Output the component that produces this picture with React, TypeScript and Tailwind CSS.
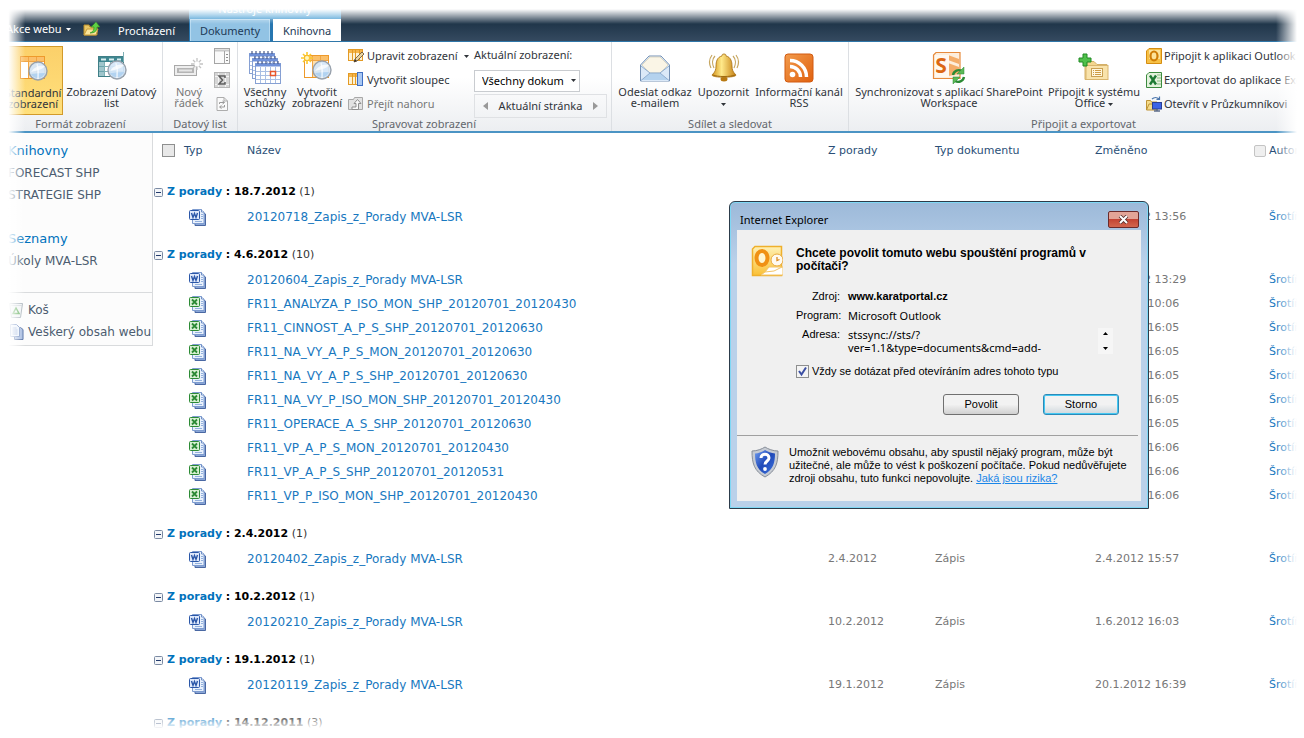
import { ReactNode, useState } from "react";

interface Item {
  kind: "word" | "excel";
  name: string;
  meeting?: string;
  docType?: string;
  modified: string;
}

interface Group {
  date: string;
  count: number;
  items: Item[];
}

const GROUPS: Group[] = [
  {
    date: "18.7.2012",
    count: 1,
    items: [{ kind: "word", name: "20120718_Zapis_z_Porady MVA-LSR", modified: "18.7.2012 13:56" }],
  },
  {
    date: "4.6.2012",
    count: 10,
    items: [
      { kind: "word", name: "20120604_Zapis_z_Porady MVA-LSR", modified: "18.7.2012 13:29" },
      { kind: "excel", name: "FR11_ANALYZA_P_ISO_MON_SHP_20120701_20120430", modified: "4.6.2012 10:06" },
      { kind: "excel", name: "FR11_CINNOST_A_P_S_SHP_20120701_20120630", modified: "1.6.2012 16:05" },
      { kind: "excel", name: "FR11_NA_VY_A_P_S_MON_20120701_20120630", modified: "1.6.2012 16:05" },
      { kind: "excel", name: "FR11_NA_VY_A_P_S_SHP_20120701_20120630", modified: "1.6.2012 16:05" },
      { kind: "excel", name: "FR11_NA_VY_P_ISO_MON_SHP_20120701_20120430", modified: "1.6.2012 16:05" },
      { kind: "excel", name: "FR11_OPERACE_A_S_SHP_20120701_20120630", modified: "1.6.2012 16:05" },
      { kind: "excel", name: "FR11_VP_A_P_S_MON_20120701_20120430", modified: "1.6.2012 16:06" },
      { kind: "excel", name: "FR11_VP_A_P_S_SHP_20120701_20120531", modified: "1.6.2012 16:06" },
      { kind: "excel", name: "FR11_VP_P_ISO_MON_SHP_20120701_20120430", modified: "1.6.2012 16:06" },
    ],
  },
  {
    date: "2.4.2012",
    count: 1,
    items: [
      { kind: "word", name: "20120402_Zapis_z_Porady MVA-LSR", meeting: "2.4.2012", docType: "Zápis", modified: "2.4.2012 15:57" },
    ],
  },
  {
    date: "10.2.2012",
    count: 1,
    items: [
      { kind: "word", name: "20120210_Zapis_z_Porady MVA-LSR", meeting: "10.2.2012", docType: "Zápis", modified: "1.6.2012 16:03" },
    ],
  },
  {
    date: "19.1.2012",
    count: 1,
    items: [
      { kind: "word", name: "20120119_Zapis_z_Porady MVA-LSR", meeting: "19.1.2012", docType: "Zápis", modified: "20.1.2012 16:39" },
    ],
  },
  { date: "14.12.2011", count: 3, items: [] },
];

/* ---------- icons ---------- */

function FolderUpIcon() {
  return (
    <svg width="17" height="16" viewBox="0 0 17 16">
      <path d="M1 4h5l1 2h7v8H1z" fill="#e9c765" stroke="#b98e2c" />
      <path d="M1 14l3-6h11l-2 6z" fill="#fbe59b" stroke="#c89c38" />
      <path d="M7 12c3-1 4-3 4-6H8l5-5 4 5h-3c0 4-2 6-7 6z" fill="#5fd043" stroke="#2a8a1d" strokeWidth=".6" />
    </svg>
  );
}

function Lens() {
  return (
    <g>
      <circle cx="21" cy="18" r="9" fill="#d5e6f7" fillOpacity=".93" stroke="#98a1ac" strokeWidth="1.400" />
      <path d="M14 19c4-6 9-7 14-6-2 3-6 4-14 6z" fill="#fff" fillOpacity=".75" />
      <path d="M14 21q8-1 14-1-2 5-7 5t-7-4z" fill="#a9cdef" fillOpacity=".8" />
      <path d="M20 11q2 7 1 15" fill="none" stroke="#fff" strokeWidth="1.500" strokeOpacity=".7" />
    </g>
  );
}

function GridViewIcon({ sparkle }: { sparkle?: boolean }) {
  return (
    <svg width="32" height="32" viewBox="0 0 32 32">
      <rect x="3.500" y="3.500" width="24" height="22" fill="#fff" stroke="#ee9a2b" />
      <rect x="4" y="4" width="23" height="4" fill="#fbc06a" />
      <path d="M11.500 4v21M19.500 4v21M4 8.500h23" stroke="#f0a545" />
      <rect x="12" y="9" width="7" height="16" fill="#fde0b0" />
      <Lens />
      {sparkle && (
        <g stroke="#fbc92d" strokeWidth="1.600">
          <path d="M6 0v12M0 6h12M2 2l8 8M10 2l-8 8" />
          <circle cx="6" cy="6" r="2" fill="#fff6c0" stroke="none" />
        </g>
      )}
    </svg>
  );
}

function DatasheetIcon() {
  return (
    <svg width="32" height="32" viewBox="0 0 32 32">
      <rect x="2.500" y="4.500" width="25" height="20" fill="#fff" stroke="#3f7f87" />
      <rect x="3" y="5" width="24" height="5" fill="#3f8791" />
      <path d="M5 7.500h5M13 7.500h5M21 7.500h4" stroke="#d9eef0" strokeWidth="2" />
      <path d="M3 14.500h24M3 19.500h24M8.500 10v14M14.500 10v14M20.500 10v14M27.500 0v10" stroke="#7fb0b5" />
      <rect x="3" y="10" width="5" height="14" fill="#5f9fa8" fillOpacity=".6" />
      <Lens />
    </svg>
  );
}

function NewRowIcon() {
  return (
    <svg width="32" height="32" viewBox="0 0 32 32">
      <rect x="1.500" y="13.500" width="22" height="10" fill="#eee" stroke="#a9a9a9" />
      <rect x="4" y="16" width="17" height="5" fill="#b5b5b5" />
      <rect x="6" y="17.500" width="13" height="2" fill="#e6e6e6" />
      <g stroke="#c3c3c3" strokeWidth="1.300">
        <path d="M24 6v12M18 12h12M20 8l8 8M28 8l-8 8" />
      </g>
      <circle cx="24" cy="12" r="2.500" fill="#fff" />
    </svg>
  );
}

function PaneIcon() {
  return (
    <svg width="16" height="16" viewBox="0 0 16 16">
      <rect x=".5" y=".5" width="15" height="15" fill="#fafafa" stroke="#a5a5a5" />
      <path d="M1 2.500h14" stroke="#c9c9c9" strokeWidth="2" />
      <path d="M10.500 3v12" stroke="#a5a5a5" />
      <path d="M12 6.500h2M12 9.500h2M12 12.500h2" stroke="#8d8d8d" />
    </svg>
  );
}

function SumIcon() {
  return (
    <svg width="16" height="16" viewBox="0 0 16 16">
      <rect x=".5" y=".5" width="15" height="15" fill="#d6d6d6" stroke="#b5b5b5" />
      <path d="M1 4.500h14M1 12.500h14M4.500 1v14M11.500 1v14" stroke="#f4f4f4" />
      <path d="M11 6V4H5l3.500 4L5 12h6v-2" fill="none" stroke="#5c5c5c" strokeWidth="1.500" />
    </svg>
  );
}

function RefreshPageIcon() {
  return (
    <svg width="16" height="16" viewBox="0 0 16 16">
      <path d="M3 1.500h7l3.500 3.500v9.500H3z" fill="#fafafa" stroke="#adadad" />
      <path d="M10 1.500V5h3.500" fill="none" stroke="#adadad" />
      <path d="M5.500 8V6.500H10M8.500 5l2 1.500-2 1.500M10.500 9v2H6M7.500 9.500L5.500 11l2 1.500" fill="none" stroke="#9a9a9a" />
    </svg>
  );
}

function MeetingsIcon() {
  const sheets = [
    [1, 2],
    [4, 7],
    [7, 12],
  ];
  return (
    <svg width="34" height="34" viewBox="0 0 34 34">
      {sheets.map(([x, y]) => (
        <g key={x}>
          <rect x={x + 0.5} y={y + 0.5} width="25" height="20" fill="#fff" stroke="#86a0d3" />
          <rect x={x + 0.5} y={y + 0.5} width="25" height="3" fill="#6f90d8" />
          <path
            d={`M${x + 3} ${y - 2}v3M${x + 7} ${y - 2}v3M${x + 11} ${y - 2}v3M${x + 15} ${y - 2}v3M${x + 19} ${y - 2}v3M${x + 23} ${y - 2}v3`}
            stroke="#4a5b8c"
            strokeWidth="1.200"
          />
          <path
            d={`M${x + 5.5} ${y + 4}v16M${x + 10.5} ${y + 4}v16M${x + 15.5} ${y + 4}v16M${x + 20.5} ${y + 4}v16M${x + 1} ${y + 8.5}h24M${x + 1} ${y + 12.5}h24M${x + 1} ${y + 16.5}h24`}
            stroke="#a9bee3"
          />
        </g>
      ))}
      <rect x="22.500" y="20.500" width="5" height="4" fill="#fff" stroke="#e8562b" strokeWidth="1.500" />
    </svg>
  );
}

function TableIcon({ variant }: { variant: "edit" | "column" }) {
  return (
    <svg width="17" height="16" viewBox="0 0 17 16">
      <rect x=".5" y="1.500" width="14" height="11" fill="#fdf1d2" stroke="#e39a24" />
      <rect x="1" y="2" width="13" height="3" fill="#f5b54a" />
      <path d="M4.500 2v10M7.500 2v10M11.500 2v10" stroke="#e39a24" />
      {variant === "edit" ? (
        <g>
          <path d="M6 14l1-3 7-7 2 2-7 7z" fill="#e8d3a0" stroke="#5d4a30" strokeWidth=".8" />
          <path d="M6 14l1-3 2 2z" fill="#3b3126" />
        </g>
      ) : (
        <rect x="9.500" y=".5" width="5" height="13" fill="#a9c8f3" stroke="#3f6fc4" />
      )}
    </svg>
  );
}

function GoUpIcon() {
  return (
    <svg width="17" height="16" viewBox="0 0 17 16">
      <path d="M.5 3.500h5l1-2h8v12H.5z" fill="#e2e2e2" stroke="#a8a8a8" />
      <path d="M4 13.500h6.500V7.500H13L9.500 3.500 6 7.500h2v3.500H4z" fill="#fafafa" stroke="#8f8f8f" />
    </svg>
  );
}

function EnvelopeIcon() {
  return (
    <svg width="32" height="30" viewBox="0 0 32 30">
      <path d="M1.500 12L10 3h12l8.500 9v16h-29z" fill="#e4effa" stroke="#7490b4" />
      <path d="M3 12l8-8h10l8 8-8 8H11z" fill="#faf5e6" stroke="#d6d0bb" strokeWidth=".8" />
      <path d="M2 13l9 7h10l9-7v15H2z" fill="#dbe9f8" />
      <path d="M3 27l8-7h10l8 7z" fill="#b4d2ee" />
      <path d="M2 27.500l9-7.500h10l9 7.500M2 13l9 7M30 13l-9 7" fill="none" stroke="#8fadd0" />
    </svg>
  );
}

function BellIcon() {
  return (
    <svg width="32" height="32" viewBox="0 0 32 32">
      <defs>
        <linearGradient id="bell" x1="0" x2="1">
          <stop offset="0" stopColor="#d1921a" />
          <stop offset=".4" stopColor="#ffe98a" />
          <stop offset="1" stopColor="#c47e10" />
        </linearGradient>
      </defs>
      <path d="M7 4c-3 3-3 8-1 12M4 3c-3 4-3 9-1 13M25 4c3 3 3 8 1 12M28 3c3 4 3 9 1 13" fill="none" stroke="#c6a660" strokeWidth="1.200" />
      <ellipse cx="16" cy="27" rx="3.500" ry="2.500" fill="#b87912" />
      <path d="M16 2c-2 0-2 1-2 2-5 1-6 6-6 10s-1 6-4 9c0 3 24 3 24 0-3-3-4-5-4-9s-1-9-6-10c0-1 0-2-2-2z" fill="url(#bell)" stroke="#a76f10" strokeWidth=".8" />
      <path d="M5 23c4 2 18 2 22 0" fill="none" stroke="#a06a10" />
    </svg>
  );
}

function RssIcon() {
  return (
    <svg width="30" height="30" viewBox="0 0 30 30">
      <defs>
        <linearGradient id="rss" x1="0" y1="0" x2="1" y2="1">
          <stop offset="0" stopColor="#f29b4c" />
          <stop offset="1" stopColor="#e0610f" />
        </linearGradient>
      </defs>
      <rect x="1" y="1" width="28" height="28" rx="3" fill="url(#rss)" stroke="#d25a10" />
      <circle cx="8.500" cy="21.500" r="2.800" fill="#fff" />
      <path d="M6 13.500a10.500 10.500 0 0 1 10.500 10.500M6 7.500a16.500 16.500 0 0 1 16.500 16.500" fill="none" stroke="#fff" strokeWidth="3.500" />
    </svg>
  );
}

function WorkspaceIcon() {
  return (
    <svg width="34" height="34" viewBox="0 0 34 34">
      <path d="M4 1.500h24v26H1.500V4z" fill="#fdeedd" stroke="#e78b3d" strokeWidth="1.200" />
      <path d="M16 4l11 4v5l-11-4zM16 12l11 4v7l-11 2z" fill="#f4ad6a" />
      <rect x="3" y="4" width="14" height="22" fill="#fff8ef" />
      <text x="9" y="22" textAnchor="middle" fontSize="21" fontWeight="bold" fill="#dc6713" fontFamily="Open Sans, sans-serif">
        S
      </text>
      <path d="M21 24a6 6 0 0 1 9-4M32 26a6 6 0 0 1-9 4" fill="none" stroke="#2b8a34" strokeWidth="2.400" />
      <path d="M32 16v7h-7zM21 33v-7h7z" fill="#5bb957" stroke="#2b8a34" strokeWidth=".5" />
    </svg>
  );
}

function ConnectOfficeIcon() {
  return (
    <svg width="34" height="34" viewBox="0 0 34 34">
      <path d="M8 10.500h9l3 3h10v15H8z" fill="#f3d68f" stroke="#d4b068" />
      <rect x="9" y="14.500" width="22" height="14" fill="#f9e3ab" stroke="#d9b56e" />
      <rect x="14.500" y="17.500" width="11" height="8" fill="#fff7df" stroke="#c9a052" />
      <path d="M16 19.500h1M18 19.500h6M16 21.500h1M18 21.500h6M16 23.500h1M18 23.500h6" stroke="#cf9c45" />
      <path d="M6 3h4v4h4v4h-4v4H6v-4H2V7h4z" fill="#4fc04b" stroke="#218a25" />
    </svg>
  );
}

function OutlookIcon() {
  return (
    <svg width="16" height="16" viewBox="0 0 16 16">
      <path d="M3 .5h12.500v15H.5V3z" fill="#f7c146" stroke="#d58d11" />
      <path d="M3 2h11v9H3z" fill="#fde39a" />
      <ellipse cx="8" cy="8" rx="3.500" ry="4.500" fill="none" stroke="#cf7d06" strokeWidth="2.200" />
    </svg>
  );
}

function ExcelIcon() {
  return (
    <svg width="16" height="16" viewBox="0 0 16 16">
      <path d="M3 .5h12.500v15H.5V3z" fill="#e3f2dc" stroke="#3c8b3f" />
      <path d="M11 3h4M11 6h4M11 9h4M11 12h4" stroke="#86bb7f" />
      <path d="M4 3.500l6 9M10 3.500l-6 9" stroke="#1d7a33" strokeWidth="2.400" />
    </svg>
  );
}

function ExplorerIcon() {
  return (
    <svg width="16" height="16" viewBox="0 0 16 16">
      <path d="M.5 4.500h4l1 1.500H11v8H.5z" fill="#f6dc8b" stroke="#bf9436" />
      <path d="M.5 14L3 8h9" fill="none" stroke="#bf9436" />
      <path d="M6 3c2-2 5-2 7 0M13.500.5v3h-3" fill="none" stroke="#4e78ae" strokeWidth="1.200" />
      <rect x="6.500" y="6.500" width="9" height="6.500" fill="#3c63e6" stroke="#2b3f94" />
      <path d="M8 15h6M11 13v2" stroke="#5d6c8a" strokeWidth="1.500" />
    </svg>
  );
}

function DocIcon({ kind }: { kind: "word" | "excel" }) {
  const ink = kind === "word" ? "#2b57a8" : "#2c8a35";
  return (
    <svg width="17" height="17" viewBox="0 0 17 17" role="img" aria-label={kind === "word" ? "Word" : "Excel"}>
      <path d="M6 3.500h8l2.500 1.500v11.500H6z" fill="#8aa6d6" stroke="#4a68a3" />
      <path d="M3.500.5h9l2.500 2.500v11.500H3.500z" fill="#e9f1fc" stroke="#7e9cd0" />
      <path d="M12.500.5V3H15" fill="#fff" stroke="#6e8fc6" />
      <path d="M12 5.500h2M12 7.500h2M12 9.500h2M6 12.500h7" stroke="#93b1de" />
      <rect x=".5" y="1.500" width="10" height="9" rx="1" fill={kind === "word" ? "#dfe9fb" : "#d8f0d2"} stroke={ink} />
      {kind === "word" ? (
        <path d="M2.500 4l1.500 4.500 1.500-4 1.500 4L8.500 4" fill="none" stroke={ink} strokeWidth="1.400" />
      ) : (
        <path d="M3 3.500l5 5M8 3.500l-5 5" stroke={ink} strokeWidth="1.800" />
      )}
    </svg>
  );
}

function BinIcon() {
  return (
    <svg width="16" height="16" viewBox="0 0 16 16">
      <path d="M1.500 1.500h13l-2 14h-9z" fill="#f0f3f5" stroke="#a8b2ba" />
      <path d="M2 3.500h12" stroke="#cdd4d9" />
      <path d="M8 6l3 5.500H5z" fill="none" stroke="#5cab55" strokeWidth="1.500" />
    </svg>
  );
}

function AllContentIcon() {
  return (
    <svg width="16" height="16" viewBox="0 0 16 16">
      <path d="M6.500 3.500h6l2.500 2v10H6.500z" fill="#9fb6de" stroke="#48669f" />
      <path d="M2.500.5h6l3 3v9h-9z" fill="#e9f1fc" stroke="#6b88bd" />
      <path d="M4.500 4h4M4.500 6h5M4.500 8h5M4.500 10h5" stroke="#8ba6d4" />
    </svg>
  );
}

function DialogOutlookIcon() {
  return (
    <svg width="32" height="32" viewBox="0 0 32 32">
      <defs>
        <linearGradient id="ol" x1="0" y1="0" x2="0" y2="1">
          <stop offset="0" stopColor="#fff1b5" />
          <stop offset="1" stopColor="#fac035" />
        </linearGradient>
      </defs>
      <path d="M4 1.500h26.500v29h-29V4z" fill="url(#ol)" stroke="#efb02c" strokeWidth="1.500" />
      <circle cx="26" cy="15" r="6" fill="#fffaf0" stroke="#e9aa3d" />
      <path d="M26 12v3.500l2.500-1" fill="none" stroke="#dd8a1c" strokeWidth="1.300" />
      <path d="M14 27l4-5h14v8H10z" fill="#fff" stroke="#f2c469" />
      <path d="M14 27l9-1 8-4" fill="none" stroke="#f2c469" />
      <ellipse cx="11" cy="13" rx="5.500" ry="7" fill="#fff6d2" stroke="#f09114" strokeWidth="4" />
    </svg>
  );
}

function ShieldIcon() {
  return (
    <svg width="28" height="32" viewBox="0 0 28 32" className="shrink-0">
      <defs>
        <linearGradient id="shield" x1="0" y1="0" x2="1" y2="1">
          <stop offset="0" stopColor="#6f9cf0" />
          <stop offset=".5" stopColor="#1f49b8" />
          <stop offset="1" stopColor="#3f75df" />
        </linearGradient>
      </defs>
      <path d="M14 1c3 2 8 4 13 4 0 12-2 20-13 26C3 25 1 17 1 5c5 0 10-2 13-4z" fill="#c6cbd3" stroke="#878e99" />
      <path d="M14 4c3 2 6 3 10 3.500C24 17 22 23.500 14 28 6 23.500 4 17 4 7.500 8 7 11 6 14 4z" fill="url(#shield)" />
      <path d="M10 12c0-5 8-5 8 0 0 3-4 3-4 6.500" fill="none" stroke="#fff" strokeWidth="3" />
      <circle cx="14" cy="23" r="1.900" fill="#fff" />
    </svg>
  );
}

function Caret({ className = "" }: { className?: string }) {
  return (
    <svg width="5" height="3" viewBox="0 0 5 3" className={`inline-block shrink-0 ${className}`}>
      <path d="M0 0h5L2.500 3z" fill="currentColor" />
    </svg>
  );
}

/* ---------- ribbon ---------- */

function RibbonGroup({ label, className, children }: { label: string; className: string; children: ReactNode }) {
  return (
    <section className={`flex shrink-0 flex-col border-r border-[#dcdfe3] pr-1 ${className}`}>
      <div className="flex h-[76px] items-start">{children}</div>
      <h2 className="text-center text-[11px] leading-3 whitespace-nowrap text-[#62666c]">{label}</h2>
    </section>
  );
}

function BigButton({ icon, className, children }: { icon: ReactNode; className: string; children: ReactNode }) {
  return (
    <button className={`mt-1 flex h-[69px] shrink-0 flex-col items-center pt-1 text-center text-[11px] leading-[11px] whitespace-nowrap ${className}`}>
      <span className="flex h-9 shrink-0 items-center">{icon}</span>
      <span>{children}</span>
    </button>
  );
}

function SmallButton({ icon, label, className = "", children }: { icon: ReactNode; label?: string; className?: string; children?: ReactNode }) {
  return (
    <button aria-label={label} className={`flex h-6 items-center gap-0.5 text-[11px] leading-4 whitespace-nowrap ${className}`}>
      {icon}
      {children}
    </button>
  );
}

function Ribbon() {
  return (
    <div className="flex h-[92px] overflow-hidden border-t border-b-2 border-t-[#2f77a9] border-b-[#4b94c4] bg-linear-to-b from-white from-40% to-[#eceef1] text-[#30343a]">
      <RibbonGroup label="Formát zobrazení" className="w-[163px] pl-[3px]">
        <BigButton icon={<GridViewIcon />} className="w-[60px] border border-[#d29a2a] bg-linear-to-b from-[#fbd06a] to-[#ffe07c]">
          Standardní
          <br />
          zobrazení
        </BigButton>
        <BigButton icon={<DatasheetIcon />} className="w-[97px]">
          Zobrazení Datový
          <br />
          list
        </BigButton>
      </RibbonGroup>

      <RibbonGroup label="Datový list" className="w-[75px] pl-1">
        <BigButton icon={<NewRowIcon />} className="w-11 text-[#777]">
          Nový
          <br />
          řádek
        </BigButton>
        <div className="flex flex-col pt-0.5 pl-[3px]">
          <SmallButton icon={<PaneIcon />} label="Podokno úloh" />
          <SmallButton icon={<SumIcon />} label="Součty" />
          <SmallButton icon={<RefreshPageIcon />} label="Obnovit data" />
        </div>
      </RibbonGroup>

      <RibbonGroup label="Spravovat zobrazení" className="w-[374px] pl-[3px]">
        <BigButton icon={<MeetingsIcon />} className="w-12">
          Všechny
          <br />
          schůzky
        </BigButton>
        <BigButton icon={<GridViewIcon sparkle />} className="w-14">
          Vytvořit
          <br />
          zobrazení
        </BigButton>
        <div className="flex w-[129px] flex-col pt-0.5 pl-[3px]">
          <SmallButton icon={<TableIcon variant="edit" />}>
            Upravit zobrazení <Caret className="ml-1" />
          </SmallButton>
          <SmallButton icon={<TableIcon variant="column" />}>Vytvořit sloupec</SmallButton>
          <SmallButton icon={<GoUpIcon />} className="text-[#777]">
            Přejít nahoru
          </SmallButton>
        </div>
        <div className="flex flex-col pt-0.5">
          <label htmlFor="view" className="h-[26px] text-[11px] leading-[22px]">
            Aktuální zobrazení:
          </label>
          <div className="relative h-[22px] w-[106px]">
            <select id="view" className="block h-full w-full appearance-none border border-[#c9ccd0] bg-white pl-[7px] text-[11px] text-black">
              <option>Všechny dokum</option>
            </select>
            <Caret className="pointer-events-none absolute top-[9px] right-1" />
          </div>
          <div className="mt-0.5 flex h-6 w-[133px] items-center justify-between border border-[#dfe1e4] px-2 text-[11px] whitespace-nowrap">
            <button aria-label="Předchozí" className="text-[#999]">
              <svg width="5" height="8" viewBox="0 0 5 8">
                <path d="M5 0v8L0 4z" fill="currentColor" />
              </svg>
            </button>
            <span>Aktuální stránka</span>
            <button aria-label="Další" className="text-[#999]">
              <svg width="5" height="8" viewBox="0 0 5 8">
                <path d="M0 0v8l5-4z" fill="currentColor" />
              </svg>
            </button>
          </div>
        </div>
      </RibbonGroup>

      <RibbonGroup label="Sdílet a sledovat" className="w-[237px] pl-1">
        <BigButton icon={<EnvelopeIcon />} className="w-[78px]">
          Odeslat odkaz
          <br />
          e-mailem
        </BigButton>
        <BigButton icon={<BellIcon />} className="w-[59px]">
          Upozornit
          <br />
          <Caret />
        </BigButton>
        <BigButton icon={<RssIcon />} className="w-[92px]">
          Informační kanál
          <br />
          RSS
        </BigButton>
      </RibbonGroup>

      <RibbonGroup label="Připojit a exportovat" className="w-[470px] pl-1">
        <BigButton icon={<WorkspaceIcon />} className="w-[192px]">
          Synchronizovat s aplikací SharePoint
          <br />
          Workspace
        </BigButton>
        <BigButton icon={<ConnectOfficeIcon />} className="w-[98px]">
          Připojit k systému
          <br />
          Office <Caret />
        </BigButton>
        <div className="flex flex-col pt-0.5 pl-[3px]">
          <SmallButton icon={<OutlookIcon />}>Připojit k aplikaci Outlook</SmallButton>
          <SmallButton icon={<ExcelIcon />}>Exportovat do aplikace Excel</SmallButton>
          <SmallButton icon={<ExplorerIcon />}>Otevřít v Průzkumníkovi</SmallButton>
        </div>
      </RibbonGroup>
    </div>
  );
}

function TopBar() {
  return (
    <header className="flex h-[41px] bg-linear-to-b from-[#21374b] from-60% to-[#354a60] text-[11px] text-white">
      <div className="flex w-[189px] shrink-0 items-end gap-3 pl-1.5">
        <button className="flex h-6 items-center gap-1 whitespace-nowrap">
          Akce webu <Caret />
        </button>
        <button aria-label="O úroveň výš" className="flex h-6 items-center">
          <FolderUpIcon />
        </button>
        <button className="ml-auto flex h-[22px] items-center pt-0.5 pr-3.5">Procházení</button>
      </div>
      <div className="flex w-[152px] shrink-0 flex-col bg-[#2676b0]">
        <div className="h-[19px] bg-linear-to-b from-[#5bb0e2] to-[#3794cf] text-center leading-[18px]">Nástroje knihovny</div>
        <nav className="flex h-[22px] gap-[3px] pl-px">
          <button className="w-20 border border-b-0 border-[#b5d9f0] bg-[#92c3e4] pt-0.5 text-[#1c3a57]">Dokumenty</button>
          <button className="w-[68px] bg-white pt-0.5 text-[#1c3a57]">Knihovna</button>
        </nav>
      </div>
    </header>
  );
}

/* ---------- page body ---------- */

function Sidebar() {
  return (
    <aside className="w-[153px] shrink-0 self-start border-r border-b border-[#d9dbdd] bg-[#fcfcfc] pt-[7px] pb-0.5 text-[12px] text-[#4c5d70]">
      <nav className="flex flex-col pl-2 leading-[22px] whitespace-nowrap">
        <a href="#knihovny" className="text-[13px] text-[#0072bc]">
          Knihovny
        </a>
        <a href="#forecast">FORECAST SHP</a>
        <a href="#strategie">STRATEGIE SHP</a>
        <a href="#seznamy" className="mt-[22px] text-[13px] text-[#0072bc]">
          Seznamy
        </a>
        <a href="#ukoly">Úkoly MVA-LSR</a>
      </nav>
      <nav className="mt-5 flex flex-col border-t border-[#d9dbdd] pt-1.5 pl-2 leading-[22px] whitespace-nowrap">
        <a href="#kos" className="flex items-center gap-1">
          <BinIcon /> Koš
        </a>
        <a href="#obsah" className="flex items-center gap-1">
          <AllContentIcon /> Veškerý obsah webu
        </a>
      </nav>
    </aside>
  );
}

function Library() {
  return (
    <table className="w-full min-w-0 flex-1 table-fixed text-left text-[11px] leading-4">
      <colgroup>
        <col className="w-[94px]" />
        <col />
        <col className="w-[107px]" />
        <col className="w-[160px]" />
        <col className="w-[159px]" />
        <col className="w-[50px]" />
      </colgroup>
      <thead>
        <tr className="h-[33px] text-[#2a4f77]">
          <th className="pt-0.5 pl-[9px] font-normal">
            <span className="flex items-center gap-[9px]">
              <input type="checkbox" aria-label="Vybrat vše" className="size-[13px] appearance-none border border-[#8e8f8f] bg-[#e8e8e8]" />
              Typ
            </span>
          </th>
          <th className="pt-0.5 font-normal">Název</th>
          <th className="pt-0.5 font-normal">Z porady</th>
          <th className="pt-0.5 font-normal">Typ dokumentu</th>
          <th className="pt-0.5 font-normal">Změněno</th>
          <th className="pt-0.5 font-normal">
            <label className="flex items-center gap-[3px]">
              <input type="checkbox" className="size-3 shrink-0 appearance-none rounded-xs border border-[#c4c4c4] bg-[#efefef]" />
              Autor
            </label>
          </th>
        </tr>
      </thead>
      {GROUPS.map((group) => (
        <tbody key={group.date}>
          <tr className="h-[39px]">
            <td colSpan={6} className="pt-3.5 pb-px pl-px text-black">
              <button className="flex items-center gap-1 whitespace-nowrap">
                <svg width="9" height="9" viewBox="0 0 9 9">
                  <rect x=".5" y=".5" width="8" height="8" rx="1" fill="#f3f5f8" stroke="#7b8aa3" />
                  <path d="M2 4.500h5" stroke="#223a6c" />
                </svg>
                <span>
                  <b className="text-[#0072bc]">Z porady</b> <b>: {group.date}</b> <span className="text-[#333]">({group.count})</span>
                </span>
              </button>
            </td>
          </tr>
          {group.items.map((item) => (
            <tr key={item.name} className="h-6 whitespace-nowrap text-[#777]">
              <td className="pl-9">
                <DocIcon kind={item.kind} />
              </td>
              <td className="text-[12px]">
                <a href="#dokument" className="text-[#1878c0]">
                  {item.name}
                </a>
              </td>
              <td>{item.meeting}</td>
              <td>{item.docType}</td>
              <td>{item.modified}</td>
              <td className="pl-[15px]">
                <a href="#autor" className="text-[#1878c0]">
                  Šrotíř
                </a>
              </td>
            </tr>
          ))}
        </tbody>
      ))}
    </table>
  );
}

/* ---------- security prompt ---------- */

function SecurityDialog() {
  const [ask, setAsk] = useState(true);

  return (
    <div
      role="dialog"
      aria-label="Internet Explorer"
      className="absolute top-[201px] left-[729px] w-[420px] rounded-t-md border border-[#2c3b4a] bg-linear-to-b from-[#9cb9d9] to-[#bad1ea] to-20% px-[7px] pb-[7px] font-['Liberation_Sans',Arial,sans-serif] text-[11px] leading-[13px] text-black shadow-[inset_0_0_0_1px_#7fd8f5]"
    >
      <div className="flex h-7 items-center justify-between pt-1.5 pr-0.5 pl-[3px]">
        <h1 className="font-['Noto_Sans',sans-serif] text-[11px]">Internet Explorer</h1>
        <button
          aria-label="Zavřít"
          className="grid h-[17px] w-[31px] place-items-center rounded-xs border border-[#6b2b2b] bg-linear-to-b from-[#e2a497] from-45% via-[#c34434] via-50% to-[#d2664f]"
        >
          <svg width="11" height="9" viewBox="0 0 11 9">
            <path d="M2 1l7 7M9 1L2 8" stroke="#53302e" strokeWidth="3.600" />
            <path d="M2 1l7 7M9 1L2 8" stroke="#fff" strokeWidth="2" />
          </svg>
        </button>
      </div>
      <div className="bg-[#f0f0f0]">
        <div className="flex gap-[13px] px-3.5 pt-[15px]">
          <DialogOutlookIcon />
          <div className="flex-1 pt-0.5">
            <p className="text-[12px] font-bold whitespace-nowrap">
              Chcete povolit tomuto webu spouštění programů v
              <br />
              počítači?
            </p>
            <dl className="mt-[17px] grid grid-cols-[44px_1fr] gap-x-2 gap-y-1.5">
              <dt className="text-right">Zdroj:</dt>
              <dd className="font-bold">www.karatportal.cz</dd>
              <dt className="text-right">Program:</dt>
              <dd className="font-['Noto_Sans',sans-serif]">Microsoft Outlook</dd>
              <dt className="text-right">Adresa:</dt>
              <dd className="flex justify-between pr-[14px] font-['Noto_Sans',sans-serif]">
                <span>
                  stssync://sts/?
                  <br />
                  ver=1.1&amp;type=documents&amp;cmd=add-
                </span>
                <span className="flex w-[15px] flex-col items-center justify-between bg-[#f6f6f6] py-1">
                  <Caret className="rotate-180" />
                  <Caret />
                </span>
              </dd>
            </dl>
            <label className="mt-[11px] flex items-center gap-[3px]">
              <span className="relative size-[13px]">
                <input
                  type="checkbox"
                  checked={ask}
                  onChange={() => setAsk(!ask)}
                  className="block size-[13px] appearance-none border border-[#8e8f8f] bg-[#f4f4f4]"
                />
                {ask && (
                  <svg width="13" height="13" viewBox="0 0 13 13" className="pointer-events-none absolute inset-0">
                    <path d="M3 6l2.500 3.500L10 2.500" fill="none" stroke="#3b4fa3" strokeWidth="2" />
                  </svg>
                )}
              </span>
              Vždy se dotázat před otevíráním adres tohoto typu
            </label>
          </div>
        </div>
        <div className="mt-4 flex justify-end gap-6 pr-[22px]">
          <button className="h-[21px] w-[76px] rounded-[3px] border border-[#707070] bg-linear-to-b from-[#f2f2f2] from-50% to-[#d0d0d0]">Povolit</button>
          <button className="h-[21px] w-[76px] rounded-[3px] border border-[#2c8ab8] bg-linear-to-b from-[#f2f2f2] from-50% to-[#cfd8dd] shadow-[inset_0_0_0_1px_#44c8f2]">
            Storno
          </button>
        </div>
        <div className="mt-5 mr-[3px] flex gap-2.5 border-t border-[#a0a0a0] pt-2.5 pb-4 pl-3.5">
          <ShieldIcon />
          <p className="whitespace-nowrap">
            Umožnit webovému obsahu, aby spustil nějaký program, může být
            <br />
            užitečné, ale může to vést k poškození počítače. Pokud nedůvěřujete
            <br />
            zdroji obsahu, tuto funkci nepovolujte.{" "}
            <a href="#rizika" className="text-[#1a86e8] underline">
              Jaká jsou rizika?
            </a>
          </p>
        </div>
      </div>
    </div>
  );
}

export default function App() {
  return (
    <div className="relative min-h-screen overflow-hidden bg-white font-['Noto_Sans','Open_Sans',sans-serif]">
      <TopBar />
      <Ribbon />
      <main className="flex items-start font-['DejaVu_Sans',Verdana,sans-serif]">
        <Sidebar />
        <Library />
      </main>
      <SecurityDialog />

      {/* white vignette around the page */}
      <div className="pointer-events-none absolute inset-x-0 top-0 h-[30px] bg-linear-to-b from-white from-30% to-transparent to-80%" />
      <div className="pointer-events-none absolute inset-x-0 bottom-0 h-7 bg-linear-to-t from-white from-30% to-transparent" />
      <div className="pointer-events-none absolute inset-y-0 left-0 w-7 bg-linear-to-r from-white from-30% to-transparent to-90%" />
      <div className="pointer-events-none absolute inset-y-0 right-0 w-7 bg-linear-to-l from-white from-25% to-transparent" />
    </div>
  );
}
